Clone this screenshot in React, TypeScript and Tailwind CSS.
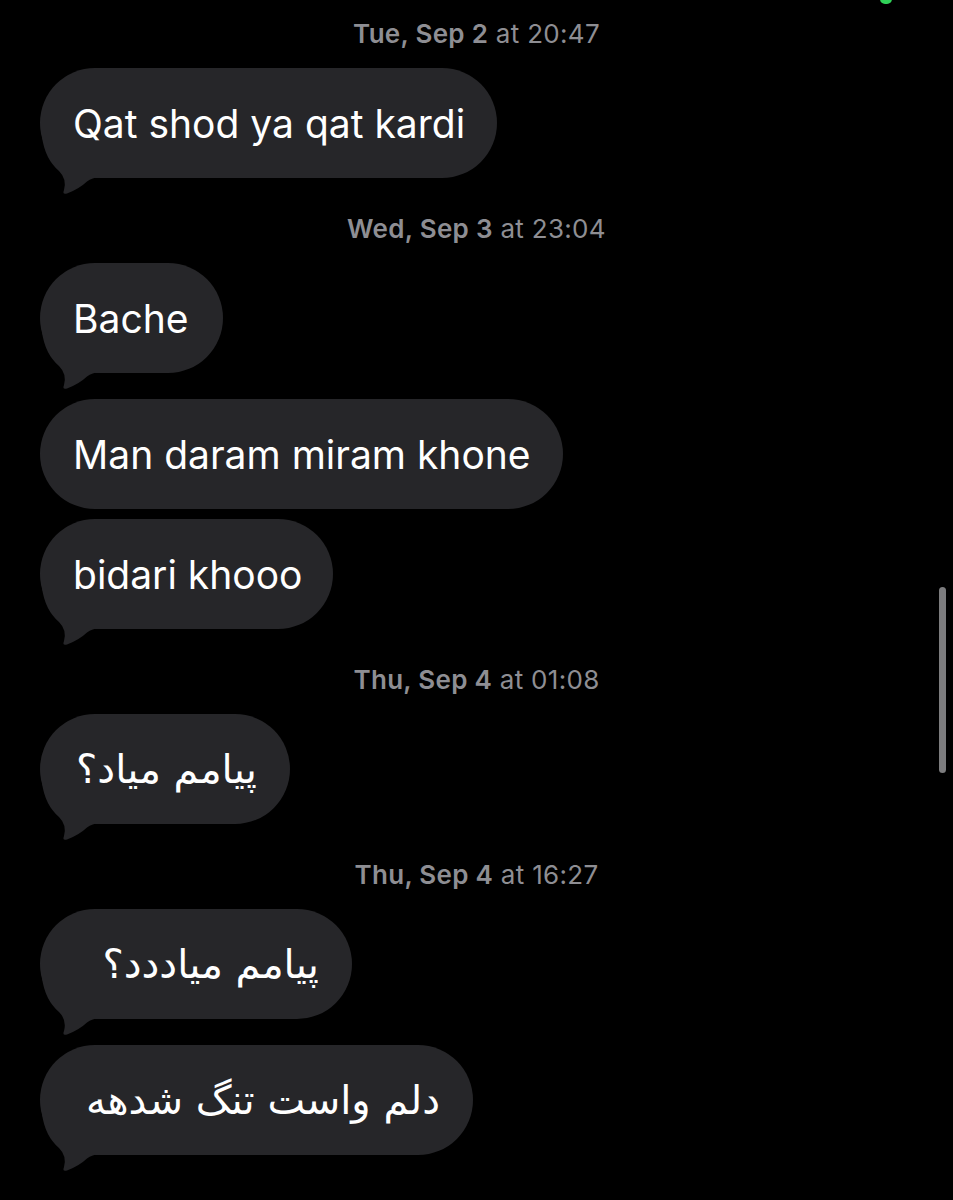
type Msg = { text: string; width: number; tail: boolean; rtl?: boolean };
type Group = { day: string; time: string; msgs: Msg[] };

const groups: Group[] = [
  {
    day: "Tue, Sep 2",
    time: "at 20:47",
    msgs: [{ text: "Qat shod ya qat kardi", width: 457, tail: true }],
  },
  {
    day: "Wed, Sep 3",
    time: "at 23:04",
    msgs: [
      { text: "Bache", width: 183, tail: true },
      { text: "Man daram miram khone", width: 523, tail: false },
      { text: "bidari khooo", width: 293, tail: true },
    ],
  },
  {
    day: "Thu, Sep 4",
    time: "at 01:08",
    msgs: [{ text: "پیامم میاد؟", width: 250, tail: true, rtl: true }],
  },
  {
    day: "Thu, Sep 4",
    time: "at 16:27",
    msgs: [
      { text: "پیامم میاددد؟", width: 312, tail: true, rtl: true },
      { text: "دلم واست تنگ شدهه", width: 433, tail: true, rtl: true },
    ],
  },
];

// iMessage-style tail, hangs off the bottom-left corner of an incoming bubble.
function Tail() {
  return (
    <svg
      className="pointer-events-none absolute bottom-[-17px] left-0"
      width="60"
      height="58"
      viewBox="0 0 60 58"
    >
      <path
        d="M2 0 Q5 22 19 34 Q27 42 24 53 Q22 58 27 56.5 Q39 52 47 44.5 Q52 40.5 60 40 L60 0 Z"
        fill="#262629"
      />
    </svg>
  );
}

function Bubble({ text, width, tail, rtl, spaced }: Msg & { spaced: boolean }) {
  return (
    <div
      className={`relative flex h-[110px] items-center rounded-[55px] bg-[#262629] px-[33px] ${spaced ? "mb-4" : ""}`}
      style={{ width }}
    >
      {tail && <Tail />}
      {rtl ? (
        <span
          dir="rtl"
          className="relative w-full text-right font-['DejaVu_Sans',sans-serif] text-[40px] leading-none text-white"
        >
          {text}
        </span>
      ) : (
        <span className="relative whitespace-nowrap font-['Inter',sans-serif] text-[39px] leading-none text-white">
          {text}
        </span>
      )}
    </div>
  );
}

function Stamp({ day, time }: { day: string; time: string }) {
  return (
    <div className="h-[30px] self-stretch text-center font-['Inter',sans-serif] text-[26px] leading-[30px] tracking-[0.3px] text-[#8e8e93]">
      <span className="font-semibold">{day}</span> {time}
    </div>
  );
}

export default function App() {
  return (
    <div className="relative h-[1200px] w-[953px] overflow-hidden bg-black">
      {/* cut-off status indicator at the top edge */}
      <div className="absolute left-[880px] top-[-6px] h-[10px] w-[12px] rounded-full bg-[#30d158]" />
      {/* scroll indicator */}
      <div className="absolute left-[939px] top-[587px] h-[186px] w-[7px] rounded-full bg-[#7c7c7e]" />

      <div className="flex flex-col gap-[36px] px-[40px] pt-[19px]">
        {groups.map((g, gi) => (
          <section key={gi} className="flex flex-col items-start">
            <Stamp day={g.day} time={g.time} />
            <div className="mt-[19px] flex flex-col items-start gap-[10px]">
              {g.msgs.map((m, mi) => (
                <Bubble key={mi} {...m} spaced={m.tail && mi < g.msgs.length - 1} />
              ))}
            </div>
          </section>
        ))}
      </div>
    </div>
  );
}
